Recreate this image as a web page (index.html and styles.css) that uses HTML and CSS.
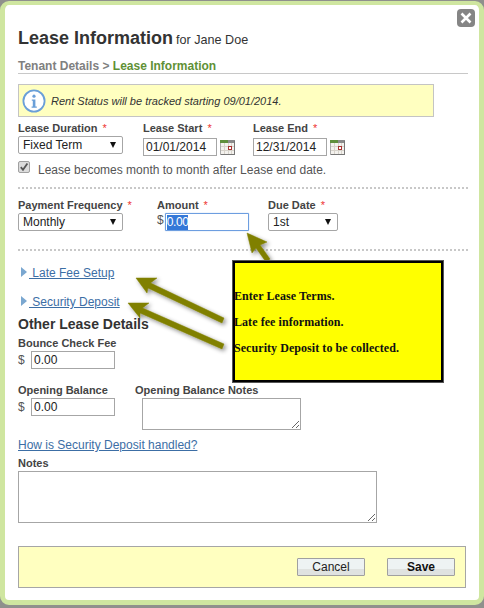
FILE: index.html
```html
<!DOCTYPE html>
<html lang="en">
<head>
<meta charset="utf-8">
<title>Lease Information</title>
<link rel="stylesheet" href="styles.css">
</head>
<body>
<div class="dialog">
  <button class="close" type="button" aria-label="Close">
    <svg width="12" height="12" viewBox="0 0 12 12"><path d="M1.5 1.5 10.5 10.5M10.5 1.5 1.5 10.5" stroke="#fff" stroke-width="2.6" fill="none"/></svg>
  </button>
  <h1 class="title">Lease Information <small>for Jane Doe</small></h1>
  <div class="crumbs">Tenant Details &gt; <span class="crumb-now">Lease Information</span></div>
  <div class="notice">
    <svg class="info" width="24" height="24" viewBox="0 0 24 24"><circle cx="12" cy="12" r="10.6" fill="#fff" stroke="#6a9fd8" stroke-width="1.8"/><circle cx="12" cy="7.2" r="1.6" fill="#6a9fd8"/><path d="M9.8 10.4h3.6v7h1.4v1.4H9.6v-1.4h1.2v-5.6h-1z" fill="#6a9fd8"/></svg>
    <em>Rent Status will be tracked starting 09/01/2014.</em>
  </div>

  <div class="row row-term">
    <div class="field w-duration">
      <label>Lease Duration <b class="req">*</b></label>
      <span class="select w-105"><select><option>Fixed Term</option></select><i class="arrow"></i></span>
    </div>
    <div class="field w-date">
      <label>Lease Start <b class="req">*</b></label>
      <span class="date"><input class="input w-74" value="01/01/2014">
        <svg class="cal" width="15" height="15" viewBox="0 0 15 15"><rect x=".5" y=".5" width="14" height="14" fill="#f4f2ee" stroke="#aaa"/><rect width="8" height="3" fill="#5f8f3c"/><rect x="8" width="7" height="3" fill="#8a8a8a"/><path d="M1 6.500h13M1 10.500h13M4.500 3v11M8.500 3v11M11.500 3v11" stroke="#d8d4cc"/><rect x="8.500" y="6.500" width="3" height="3" fill="#fff" stroke="#a33"/><path d="M14.500 1v14M1 14.500h14" stroke="#777"/></svg></span>
    </div>
    <div class="field">
      <label>Lease End <b class="req">*</b></label>
      <span class="date"><input class="input w-74" value="12/31/2014">
        <svg class="cal" width="15" height="15" viewBox="0 0 15 15"><rect x=".5" y=".5" width="14" height="14" fill="#f4f2ee" stroke="#aaa"/><rect width="8" height="3" fill="#5f8f3c"/><rect x="8" width="7" height="3" fill="#8a8a8a"/><path d="M1 6.500h13M1 10.500h13M4.500 3v11M8.500 3v11M11.500 3v11" stroke="#d8d4cc"/><rect x="8.500" y="6.500" width="3" height="3" fill="#fff" stroke="#a33"/><path d="M14.500 1v14M1 14.500h14" stroke="#777"/></svg></span>
    </div>
  </div>
  <div class="check">
    <svg class="tick" width="12" height="12" viewBox="0 0 12 12"><rect x=".5" y=".5" width="11" height="11" rx="1.500" fill="#dcdcdc" stroke="#a0a0a0"/><path d="M2.800 6.200 5 8.800 9.400 2.600" fill="none" stroke="#555" stroke-width="1.800"/></svg>
    <span>Lease becomes month to month after Lease end date.</span>
  </div>
  <div class="dots dots-1"></div>

  <div class="row row-pay">
    <div class="field w-freq">
      <label>Payment Frequency <b class="req">*</b></label>
      <span class="select w-105"><select><option>Monthly</option></select><i class="arrow"></i></span>
    </div>
    <div class="field w-amount">
      <label>Amount <b class="req">*</b></label>
      <span class="money money-tight"><span class="dollar-up">$</span><span class="input focus w-84"><span class="selected">0.00</span></span></span>
    </div>
    <div class="field">
      <label>Due Date <b class="req">*</b></label>
      <span class="select w-70"><select><option>1st</option></select><i class="arrow"></i></span>
    </div>
  </div>
  <div class="dots dots-2"></div>

  <div class="toggle toggle-1"><i class="tri"></i><a href="#">&nbsp;Late Fee Setup</a></div>
  <div class="toggle toggle-2"><i class="tri"></i><a href="#">&nbsp;Security Deposit</a></div>

  <h2 class="sub">Other Lease Details</h2>
  <div class="field">
    <label>Bounce Check Fee</label>
    <span class="money"><span class="dollar">$</span><input class="input w-84" value="0.00"></span>
  </div>
  <div class="row row-balance">
    <div class="field w-balance">
      <label>Opening Balance</label>
      <span class="money"><span class="dollar">$</span><input class="input w-84" value="0.00"></span>
    </div>
    <div class="field">
      <label>Opening Balance Notes</label>
      <textarea class="area area-small"></textarea>
    </div>
  </div>
  <a class="help" href="#">How is Security Deposit handled?</a>
  <div class="field notes">
    <label>Notes</label>
    <textarea class="area area-big"></textarea>
  </div>
  <div class="footer">
    <button class="btn" type="button">Cancel</button>
    <button class="btn btn-save" type="button">Save</button>
  </div>
</div>

<svg class="arrows" width="484" height="608" viewBox="0 0 484 608">
  <defs><filter id="sh" x="-30%" y="-30%" width="160%" height="160%"><feDropShadow dx="2" dy="2" stdDeviation="2" flood-color="#000" flood-opacity=".45"/></filter></defs>
  <g fill="#808000" stroke="#808000" filter="url(#sh)">
    <path d="M247 233 267 242 260 245 270 259 266 262 256 248 252 253Z" stroke-width=".5"/>
    <path d="M136 278 157 278 150.500 283 224 318 222 323 148 288 147 293Z" stroke-width=".5"/>
    <path d="M128 303 149 303 142.500 308 224 344 222 349 140 313 140 318Z" stroke-width=".5"/>
  </g>
</svg>
<div class="callout">
  <p>Enter Lease Terms.</p>
  <p>Late fee information.</p>
  <p>Security Deposit to be collected.</p>
</div>
</body>
</html>
```
FILE: styles.css
```css
* { box-sizing: border-box; }
html, body { margin: 0; height: 100%; }
body {
  position: relative;
  width: 484px;
  height: 608px;
  overflow: hidden;
  background: #8f908c;
  font: 12px "Liberation Sans", Arial, sans-serif;
  color: #333;
  padding-top: 1px;
}
.dialog {
  position: relative;
  width: 484px;
  height: 604px;
  border: 5px solid #cfe6a0;
  border-top-width: 4px;
  border-radius: 9px;
  background: #fff;
  padding: 21px 11px 0 13px;
}
.close {
  position: absolute;
  top: 4px;
  right: 4px;
  width: 18px;
  height: 18px;
  border: 0;
  border-radius: 4px;
  background: #858585;
  padding: 0;
  display: flex;
  align-items: center;
  justify-content: center;
}
.title {
  margin: 0;
  font-size: 18px;
  line-height: 24px;
  font-weight: bold;
  color: #333;
}
.title small { font-size: 12.600px; font-weight: normal; margin-left: -2px; }
.crumbs {
  margin-top: 7px;
  line-height: 14px;
  font-weight: bold;
  color: #808080;
  border-bottom: 1px solid #c8c8c8;
}
.crumb-now { color: #5f9136; }
.notice {
  margin-top: 10px;
  width: 416px;
  height: 33px;
  display: flex;
  align-items: center;
  gap: 5px;
  padding-left: 3px;
  background: #ffffc0;
  border: 1px solid #c4c4c4;
  font-size: 11px;
}
.info { flex: none; }
.row { display: flex; }
.row-term { margin-top: 4px; }
.row-pay { margin-top: 9px; }
.row-balance { margin-top: 14px; }
.field { display: flex; flex-direction: column; }
.field label { line-height: 14px; height: 14px; font-weight: bold; font-size: 11px; color: #444; }
.w-duration { width: 125px; }
.w-date { width: 110px; }
.w-freq { width: 139px; }
.w-amount { width: 111px; }
.w-balance { width: 117px; }
.req { color: #e33; font-weight: normal; margin-left: 2px; }
.select { position: relative; display: block; height: 18px; margin-top: 1px; }
.select select {
  appearance: none;
  -webkit-appearance: none;
  width: 100%;
  height: 18px;
  border: 1px solid #a6a6a6;
  border-radius: 2px;
  background: #fff;
  padding: 0 4px;
  font: 12px "Liberation Sans", Arial, sans-serif;
  color: #222;
  display: block;
}
.arrow {
  position: absolute;
  right: 7px;
  top: 6px;
  width: 0;
  height: 0;
  border-left: 3.500px solid transparent;
  border-right: 3.500px solid transparent;
  border-top: 6px solid #111;
}
.w-105 { width: 105px; }
.w-70 { width: 70px; }
.w-74 { width: 74px; }
.w-84 { width: 84px; }
.date { display: flex; align-items: center; gap: 3px; margin-top: 3px; }
.cal { flex: none; }
.input {
  display: block;
  height: 18px;
  border: 1px solid #a6a6a6;
  background: #fff;
  padding: 0 2px;
  font: 12px/16px "Liberation Sans", Arial, sans-serif;
  color: #222;
}
.focus {
  border-color: #6d9ee0;
  box-shadow: 0 0 1px #6d9ee0;
  border-radius: 1px;
  padding-left: 1px;
}
.selected { background: #3478d8; color: #fff; display: inline-block; line-height: 15px; letter-spacing: -.4px; }
.check {
  display: flex;
  gap: 8px;
  height: 14px;
  margin-top: 7px;
  line-height: 14px;
  color: #555;
}
.tick { flex: none; margin-top: -2px; }
.dots { width: 450px; border-top: 2px dotted #c8c8c8; }
.dots-1 { margin-top: 10px; }
.dots-2 { margin-top: 18px; }
.toggle { display: flex; align-items: center; height: 14px; line-height: 14px; padding-left: 3px; }
.toggle-1 { margin-top: 15px; }
.toggle-2 { margin-top: 15px; }
.tri {
  width: 0;
  height: 0;
  border-left: 6px solid #7aa7d0;
  border-top: 5.500px solid transparent;
  border-bottom: 5.500px solid transparent;
  margin-right: 2px;
  margin-top: -3px;
}
a { color: #3c6ea5; text-decoration: underline; }
.sub { margin: 7px 0 0; font-size: 14px; line-height: 16px; font-weight: bold; color: #333; }
.sub + .field { margin-top: 4px; }
.money { display: flex; align-items: center; gap: 7px; margin-top: 1px; color: #555; }
.money-tight { gap: 1px; }
.dollar { width: 6px; }
.dollar-up { margin-top: -5px; }
.area { display: block; border: 1px solid #a6a6a6; background: #fff; padding: 2px; margin: 1px 0 0; }
.area-small { width: 159px; height: 32px; margin-left: 7px; }
.area-big { width: 359px; height: 52px; }
.help { display: block; margin-top: 8px; line-height: 14px; }
.notes { margin-top: 4px; }
.footer {
  margin-top: 23px;
  width: 448px;
  height: 42px;
  background: #ffffc0;
  border: 1px solid #a6a6a6;
  display: flex;
  justify-content: flex-end;
  align-items: center;
  gap: 22px;
  padding-right: 10px;
}
.btn {
  width: 68px;
  height: 18px;
  padding: 0;
  border: 1px solid #a0a0a0;
  border-radius: 1px;
  background: linear-gradient(#eef3f3 0 60%, #dfe2e0 60%);
  font: 12px "Liberation Sans", Arial, sans-serif;
  color: #222;
}
.btn-save { font-weight: bold; color: #111; }
.arrows { position: absolute; left: 0; top: 0; pointer-events: none; }
.callout {
  position: absolute;
  left: 232px;
  top: 260px;
  width: 212px;
  height: 123px;
  background: #ff0;
  border: 3px solid #000;
  outline: 1px solid #555;
  outline-offset: -1px;
  padding: 27px 0 0 0;
  font: bold 12px/13px "Liberation Serif", "Times New Roman", serif;
  letter-spacing: .06px;
  color: #111;
}
.callout p { margin: 0 0 13px -1px; }
```
